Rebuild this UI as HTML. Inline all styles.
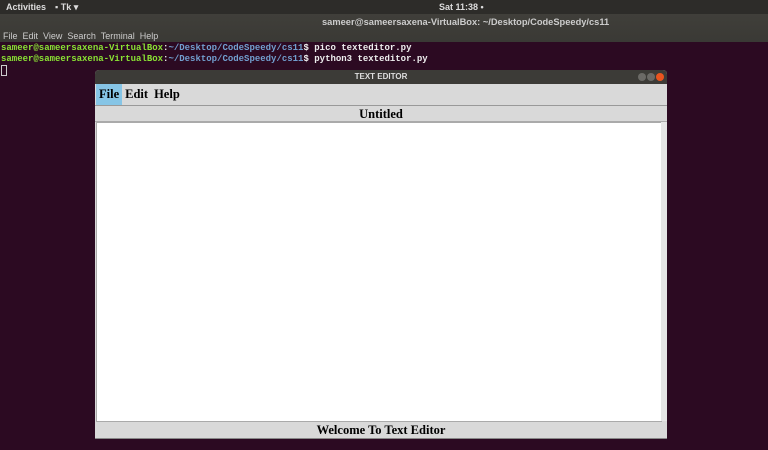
<!DOCTYPE html><html><head><style>
body{margin:0;width:768px;height:450px;overflow:hidden;background:#2c0a22;font-family:"Liberation Sans",sans-serif;position:relative}
.top{position:absolute;left:0;top:0;width:768px;height:14px;background:#2d2c29;color:#ddd;font-size:9px;font-weight:bold}
.tb{position:absolute;left:0;top:14px;width:768px;height:28px;background:linear-gradient(#403f3a,#3a3935);color:#ccc;font-size:9px}
.term{position:absolute;left:1px;font-family:"Liberation Mono",monospace;font-size:9px;color:#eee;white-space:pre;font-weight:bold}
.g{color:#8ae234}.b{color:#729fcf}
.win{position:absolute;left:95px;top:70px;width:572px;height:369px;background:#d9d9d9;border-radius:4px 4px 0 0;overflow:hidden}
.wt{height:14px;background:#3c3b37;color:#ddd;font-size:8px;font-weight:bold;text-align:center;line-height:14px;position:relative}
.menu{height:21px;border-bottom:1px solid #999;font-family:"Liberation Serif",serif;font-weight:bold;font-size:12.5px;line-height:21px;padding-left:1px;display:flex}
.menu span{padding:0 3px;display:block;height:21px}
.lab{height:15px;border-bottom:1px solid #aaa;text-align:center;font-family:"Liberation Serif",serif;font-weight:bold;font-size:12.5px;line-height:16px}
.txt{position:absolute;left:1px;top:52px;width:564px;height:298px;background:#fff;border:1px solid #aaa}
.sb{position:absolute;left:566px;top:52px;width:6px;height:299px;background:#e6e6e6}
.st{position:absolute;left:0;top:352px;width:572px;height:17px;text-align:center;font-family:"Liberation Serif",serif;font-weight:bold;font-size:12.5px;line-height:17px;border-bottom:1px solid #888;box-sizing:border-box}
.c{position:absolute;top:3px;width:8px;height:8px;border-radius:50%;background:#6b6a66}
</style></head><body>
<div class="top"><span style="position:absolute;left:6px;top:2px">Activities</span><span style="position:absolute;left:55px;top:2px">▪ Tk ▾</span><span style="position:absolute;left:439px;top:2px">Sat 11:38 •</span></div>
<div class="tb"><span style="position:absolute;left:322px;top:3px;font-weight:bold;font-size:9.3px">sameer@sameersaxena-VirtualBox: ~/Desktop/CodeSpeedy/cs11</span><span style="position:absolute;left:3px;top:17px">File&nbsp; Edit&nbsp; View&nbsp; Search&nbsp; Terminal&nbsp; Help</span></div>
<div class="term" style="top:43px"><span class="g">sameer@sameersaxena-VirtualBox</span>:<span class="b">~/Desktop/CodeSpeedy/cs11</span>$ pico texteditor.py</div>
<div class="term" style="top:54px"><span class="g">sameer@sameersaxena-VirtualBox</span>:<span class="b">~/Desktop/CodeSpeedy/cs11</span>$ python3 texteditor.py</div>
<div style="position:absolute;left:1px;top:65px;width:4px;height:9px;border:1px solid #ccc"></div>
<div class="win">
<div class="wt">TEXT EDITOR<span class="c" style="left:543px"></span><span class="c" style="left:552px"></span><span class="c" style="left:561px;background:#e9541f"></span></div>
<div class="menu"><span style="background:#86c5e6">File</span><span>Edit</span><span>Help</span></div>
<div class="lab">Untitled</div>
<div class="txt"></div><div class="sb"></div>
<div class="st">Welcome To Text Editor</div>
</div>
</body></html>
